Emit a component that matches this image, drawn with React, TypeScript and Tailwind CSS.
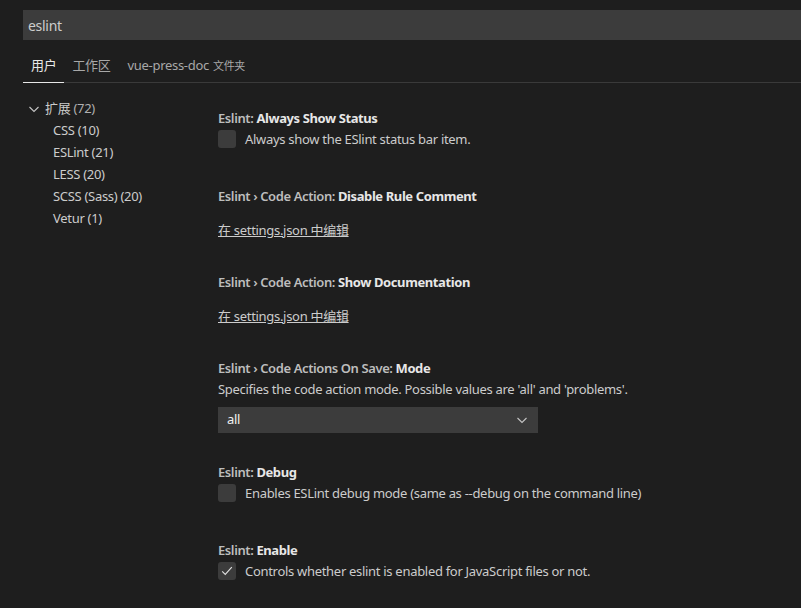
import React from "react";

const font = { fontFamily: '"Noto Sans", "Noto Sans CJK SC", sans-serif' };

function Chevron({ className }: { className?: string }) {
  return (
    <svg className={className} width="16" height="16" viewBox="0 0 16 16" fill="none">
      <path d="M3.5 6 L8 10.5 L12.5 6" stroke="currentColor" strokeWidth="1.1" />
    </svg>
  );
}

function Title({ cat, label }: { cat: string; label: string }) {
  return (
    <div className="h-[18px] leading-[18px] text-[13px] whitespace-nowrap tracking-[-0.4px]">
      <span className="font-semibold text-[#bdbdbd]">{cat}</span>
      <span className="font-bold text-[#e7e7e7]">{label}</span>
    </div>
  );
}

function CheckRow({ checked, text }: { checked?: boolean; text: string }) {
  return (
    <div className="flex items-center h-[18px] gap-[9px]">
      <div className="w-[18px] h-[18px] rounded-[3px] bg-[#3c3c3c] flex items-center justify-center text-[#e0e0e0]">
        {checked && (
          <svg width="14" height="14" viewBox="0 0 16 16" fill="none">
            <path d="M2.5 8.5 L6 12 L13.5 3.5" stroke="currentColor" strokeWidth="1.3" />
          </svg>
        )}
      </div>
      <span className="text-[13px] leading-[18px] text-[#cccccc] whitespace-nowrap">{text}</span>
    </div>
  );
}

function Link() {
  return (
    <div className="h-[18px] leading-[18px] text-[13px] text-[#cccccc] underline underline-offset-[1px] whitespace-nowrap">
      在 settings.json 中编辑
    </div>
  );
}

export default function App() {
  const children = ["CSS (10)", "ESLint (21)", "LESS (20)", "SCSS (Sass) (20)", "Vetur (1)"];
  return (
    <div className="w-[801px] h-[608px] bg-[#1e1e1e] overflow-hidden text-[#cccccc] tracking-[-0.3px]" style={font}>
      <div className="pt-[10px] pl-[23px]">
        <div className="h-[30px] bg-[#3c3c3c] flex items-center pl-[5px] text-[14px] text-[#cccccc]">eslint</div>
      </div>
      <div className="pl-[23px] mt-[12px]">
        <div className="flex items-end border-b border-[#3a3a3a] h-[31px]">
          <div className="h-full flex items-center pb-[4px] px-[8px] text-[13px] text-[#e7e7e7] border-b border-[#e7e7e7] -mb-px">用户</div>
          <div className="h-full flex items-center pb-[4px] px-[8px] text-[13px] text-[#a8a8a8] -mb-px">工作区</div>
          <div className="h-full flex items-center pb-[4px] px-[9px] text-[13px] text-[#a8a8a8] -mb-px gap-[4px]">
            <span>vue-press-doc</span>
            <span className="text-[11px]">文件夹</span>
          </div>
        </div>
      </div>
      <div className="flex pl-[23px]">
        <div className="w-[195px] pt-[15px] text-[13px]">
          <div className="h-[22px] flex items-center">
            <Chevron className="ml-[3px] text-[#c5c5c5]" />
            <span className="ml-[3px]">扩展 <span className="text-[#b0b0b0]">(72)</span></span>
          </div>
          {children.map((c) => (
            <div key={c} className="h-[22px] flex items-center pl-[30px]">{c}</div>
          ))}
        </div>
        <div className="flex-1 pt-[26px]">
          <Title cat="Eslint: " label="Always Show Status" />
          <div className="mt-[3px]">
            <CheckRow text="Always show the ESlint status bar item." />
          </div>

          <div className="mt-[39px]">
            <Title cat="Eslint › Code Action: " label="Disable Rule Comment" />
          </div>
          <div className="mt-[16px]">
            <Link />
          </div>

          <div className="mt-[34px]">
            <Title cat="Eslint › Code Action: " label="Show Documentation" />
          </div>
          <div className="mt-[16px]">
            <Link />
          </div>

          <div className="mt-[34px]">
            <Title cat="Eslint › Code Actions On Save: " label="Mode" />
          </div>
          <div className="mt-[3px] h-[18px] leading-[18px] text-[13px] whitespace-nowrap">
            Specifies the code action mode. Possible values are 'all' and 'problems'.
          </div>
          <div className="mt-[9px] w-[320px] h-[26px] bg-[#3c3c3c] flex items-center justify-between pl-[9px] pr-[8px] text-[13px] text-[#f0f0f0]">
            <span>all</span>
            <Chevron className="text-[#c5c5c5]" />
          </div>

          <div className="mt-[30px]">
            <Title cat="Eslint: " label="Debug" />
          </div>
          <div className="mt-[3px]">
            <CheckRow text="Enables ESLint debug mode (same as --debug on the command line)" />
          </div>

          <div className="mt-[39px]">
            <Title cat="Eslint: " label="Enable" />
          </div>
          <div className="mt-[3px]">
            <CheckRow checked text="Controls whether eslint is enabled for JavaScript files or not." />
          </div>
        </div>
      </div>
    </div>
  );
}
